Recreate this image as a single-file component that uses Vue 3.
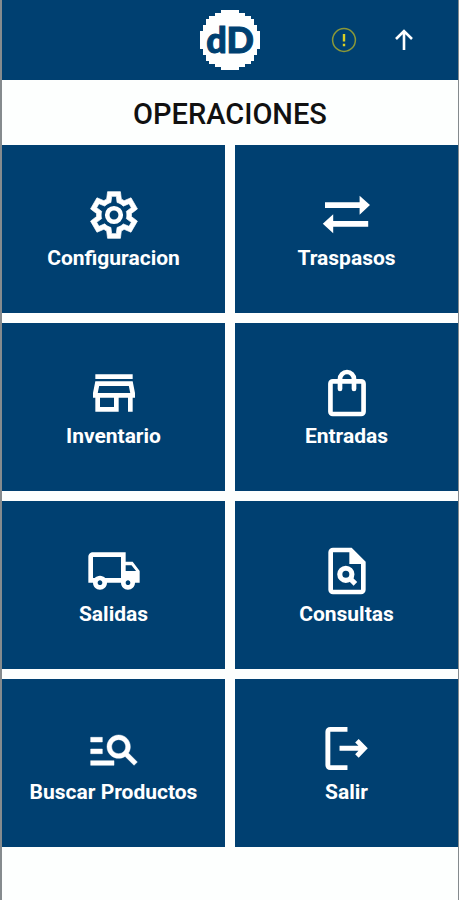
<script setup>
const logoRows = Array.from({ length: 20 }, (_, i) => {
  const half = Math.round(Math.sqrt(100 - (i - 9.5) ** 2))
  return { x: (10 - half) * 3, y: i * 3, width: half * 6 }
})

const operations = [
  { id: 'settings', label: 'Configuracion' },
  { id: 'transfer', label: 'Traspasos' },
  { id: 'store', label: 'Inventario' },
  { id: 'bag', label: 'Entradas' },
  { id: 'truck', label: 'Salidas' },
  { id: 'document', label: 'Consultas' },
  { id: 'search', label: 'Buscar Productos' },
  { id: 'exit', label: 'Salir' }
]
</script>

<template>
  <div class="page">
    <header class="bar">
      <svg class="logo" viewBox="0 0 60 60" role="img" aria-label="dD">
        <rect
          v-for="row in logoRows"
          :key="row.y"
          :x="row.x"
          :y="row.y"
          :width="row.width"
          height="3"
          shape-rendering="crispEdges"
        />
        <text x="30" y="43" text-anchor="middle">dD</text>
      </svg>
      <div class="actions">
        <button type="button" class="action" aria-label="Avisos">
          <svg viewBox="0 0 26 26" fill="none">
            <circle cx="13" cy="13" r="11.4" stroke="#8b9838" stroke-width="1.5" />
            <path d="M13 7v7.5M13 16.8v2.4" stroke="#d9cf25" stroke-width="2.4" />
          </svg>
        </button>
        <button type="button" class="action" aria-label="Subir">
          <svg viewBox="0 0 26 26" fill="none" stroke="#fff" stroke-width="2.6">
            <path d="M13 23V4M5 12l8-8 8 8" />
          </svg>
        </button>
      </div>
    </header>

    <main>
      <h1 class="title">OPERACIONES</h1>
      <nav class="grid">
        <button v-for="item in operations" :key="item.id" type="button" class="tile">
          <svg v-if="item.id === 'settings'" class="icon" viewBox="0 0 24 24" aria-hidden="true">
            <path stroke="currentColor" stroke-width="0.3" fill-rule="evenodd" d="M9.25 22l-.4-3.2q-.325-.125-.612-.3-.288-.175-.563-.375L4.7 19.375l-2.75-4.75 2.575-1.95Q4.5 12.5 4.5 12.337v-.675q0-.162.025-.337L1.95 9.375l2.75-4.75 2.975 1.25q.275-.2.575-.375.3-.175.6-.3l.4-3.2h5.5l.4 3.2q.325.125.612.3.288.175.563.375l2.975-1.25 2.75 4.75-2.575 1.95q.025.175.025.337v.675q0 .163-.05.338l2.575 1.95-2.75 4.75-2.95-1.25q-.275.2-.575.375-.3.175-.6.3l-.4 3.2ZM11 20h1.975l.35-2.65q.775-.2 1.438-.588.662-.387 1.212-.937l2.475 1.025.975-1.7-2.15-1.625q.125-.35.175-.737.05-.388.05-.788t-.05-.788q-.05-.387-.175-.737l2.15-1.625-.975-1.7-2.475 1.05q-.55-.575-1.212-.963-.663-.387-1.438-.587L13 4h-1.975l-.35 2.65q-.775.2-1.437.587-.663.388-1.213.938L5.55 7.15l-.975 1.7 2.15 1.6q-.125.375-.175.75-.05.375-.05.8 0 .4.05.775.05.375.175.75l-2.15 1.625.975 1.7 2.475-1.05q.55.575 1.213.963.662.387 1.437.587Z" />
            <circle cx="12" cy="12" r="2.9" fill="none" stroke="currentColor" stroke-width="2" />
          </svg>
          <svg v-else-if="item.id === 'transfer'" class="icon" viewBox="0 0 56 56" aria-hidden="true">
            <path d="M6 15.3h34.6V8.7L51 18 40.6 27.7V21H6zM49.2 34v5.7H14.2v6.6L3.8 36.8l10.4-9.5V34z" />
          </svg>
          <svg v-else-if="item.id === 'store'" class="icon" viewBox="0 0 24 24" aria-hidden="true">
            <path d="M18.36 9l.6 3H5.04l.6-3h12.72M20 4H4v2h16V4zm0 3H4l-1 5v2h1v6h10v-6h4v6h2v-6h1v-2l-1-5zM6 18v-4h6v4H6z" />
          </svg>
          <svg v-else-if="item.id === 'bag'" class="icon stroked" viewBox="0 0 24 24" aria-hidden="true">
            <rect x="4.9" y="7" width="14.2" height="14" rx="1" />
            <path d="M9 10.3V6a3 3 0 0 1 6 0v4.3" stroke-linecap="round" />
          </svg>
          <svg v-else-if="item.id === 'truck'" class="icon" viewBox="0 0 24 24" aria-hidden="true">
            <path fill-rule="evenodd" d="M20 8h-3V4H3c-1.100 0-2 .9-2 2v11h2c0 1.660 1.340 3 3 3s3-1.340 3-3h6c0 1.660 1.340 3 3 3s3-1.340 3-3h2v-5l-3-4zm-.5 1.500l1.960 2.500H17V9.500h2.500zM6 18c-.55 0-1-.45-1-1s.45-1 1-1 1 .45 1 1-.45 1-1 1zm2.220-3c-.55-.61-1.330-1-2.220-1s-1.670.39-2.220 1H3V6h12v9H8.220zM18 18c-.55 0-1-.45-1-1s.45-1 1-1 1 .45 1 1-.45 1-1 1z" />
            <path d="M17 12h5v3h-5z" />
          </svg>
          <svg v-else-if="item.id === 'document'" class="icon" viewBox="0 0 24 24" aria-hidden="true">
            <path fill-rule="evenodd" d="M6 2h8l6 6v12a2 2 0 0 1-2 2H6a2 2 0 0 1-2-2V4a2 2 0 0 1 2-2zm0 2v16h12V9h-5V4z" />
            <g fill="none" stroke="currentColor" stroke-width="2.2">
              <circle cx="11.5" cy="13.4" r="2.6" />
              <path d="M13.2 15.1l2.4 2.4" />
            </g>
          </svg>
          <svg v-else-if="item.id === 'search'" class="icon" viewBox="0 0 24 24" aria-hidden="true">
            <path stroke="currentColor" stroke-width="0.2" d="M7 9H2V7h5v2zm0 3H2v2h5v-2zm13.59 7l-3.83-3.83c-.8.52-1.74.83-2.76.83-2.76 0-5-2.24-5-5s2.24-5 5-5 5 2.24 5 5c0 1.02-.31 1.96-.83 2.75L22 17.59 20.59 19zM17 11c0-1.65-1.35-3-3-3s-3 1.35-3 3 1.35 3 3 3 3-1.35 3-3zM2 19h10v-2H2v2z" />
          </svg>
          <svg v-else class="icon" viewBox="0 0 24 24" aria-hidden="true">
            <path d="M12.2 3.6H4.8a1 1 0 0 0-1 1V19a1 1 0 0 0 1 1h7.4" fill="none" stroke="currentColor" stroke-width="2.1" />
            <path d="M17 7.700l3.900 4-3.900 4.100-1.500-1.500 1.400-1.500H8.800v-2.200h8.100l-1.400-1.400z" />
          </svg>
          <span class="label">{{ item.label }}</span>
        </button>
      </nav>
    </main>
  </div>
</template>

<style>
body {
  margin: 0;
  background: #fdfffe;
}
</style>

<style scoped>
.page {
  box-sizing: border-box;
  min-height: 100vh;
  border-left: 2px solid #858b8e;
  border-right: 1px solid #858b8e;
  background: #fdfffe;
  font-family: Roboto, "Liberation Sans", sans-serif;
}

.bar {
  display: grid;
  grid-template-columns: 1fr auto 1fr;
  align-items: center;
  height: 80px;
  background: #004071;
}

.logo {
  grid-column: 2;
  display: block;
  width: 60px;
  height: 60px;
  fill: #fff;
}

.logo text {
  fill: #004071;
  stroke: #004071;
  stroke-width: 1px;
  font-family: Lato, sans-serif;
  font-size: 36px;
  font-weight: 900;
}

.actions {
  display: flex;
  justify-content: flex-end;
  gap: 34px;
  padding-right: 41px;
}

.action {
  width: 26px;
  height: 26px;
  padding: 0;
  border: 0;
  background: none;
  cursor: pointer;
}

.action svg {
  display: block;
  width: 100%;
  height: 100%;
}

.title {
  margin: 0;
  padding: 18px 0 14px;
  color: #111;
  font-size: 29px;
  font-weight: 500;
  line-height: 33px;
  text-align: center;
}

.grid {
  display: grid;
  grid-template-columns: 1fr 1fr;
  gap: 10px;
}

.tile {
  display: flex;
  flex-direction: column;
  align-items: center;
  padding: 42px 0 40px;
  border: 0;
  background: #004071;
  color: #fff;
  font: inherit;
  cursor: pointer;
}

.icon {
  display: block;
  width: 56px;
  height: 56px;
  fill: currentColor;
}

.stroked {
  fill: none;
  stroke: currentColor;
  stroke-width: 2px;
}

.label {
  font-size: 21px;
  font-weight: 700;
  line-height: 30px;
}
</style>
